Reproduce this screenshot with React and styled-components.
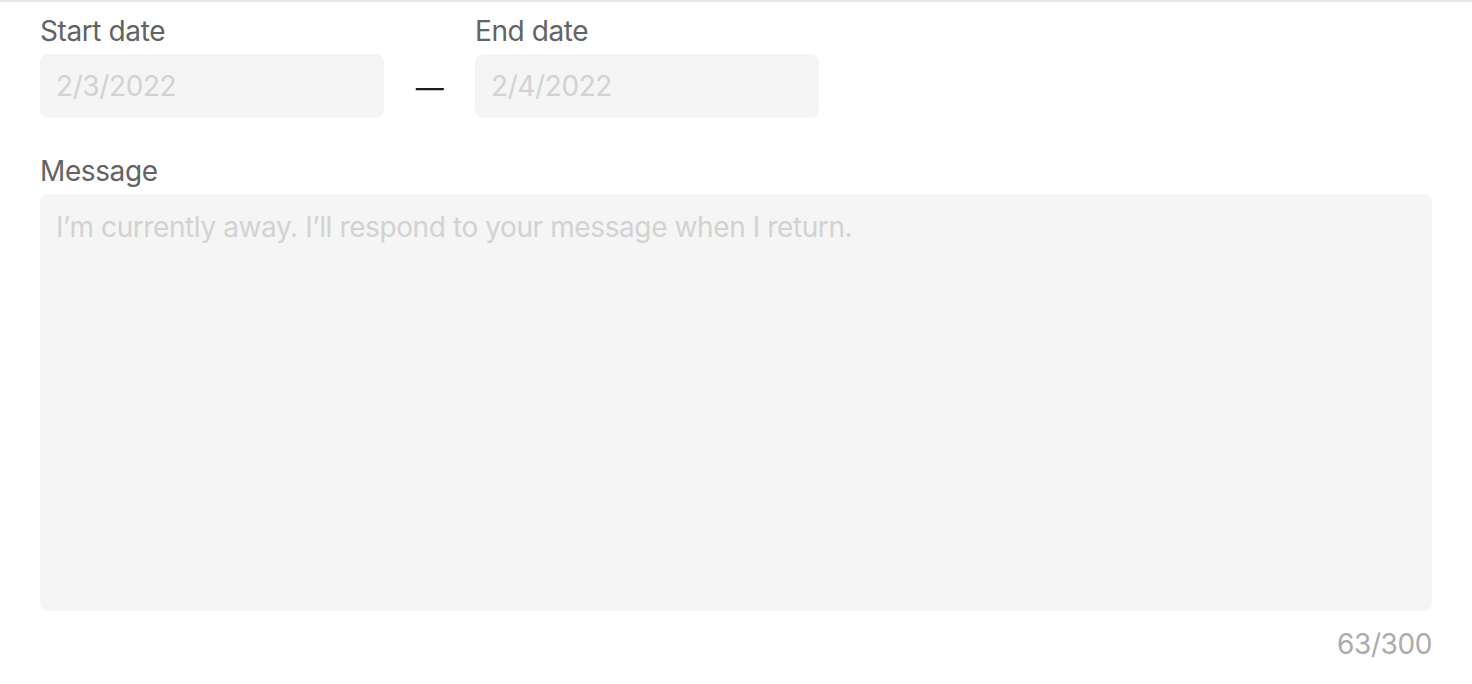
import React from 'react';
import styled, { createGlobalStyle } from 'styled-components';

const GlobalStyle = createGlobalStyle`
  html, body {
    margin: 0;
    padding: 0;
    background: #fff;
    font-family: Inter, "Liberation Sans", sans-serif;
  }
`;

const Panel = styled.div`
  width: 100%;
  box-sizing: border-box;
  border-top: 2px solid #e6e6e6;
  padding: 12px 40px 20px;
  letter-spacing: -0.4px;
`;

const DateRow = styled.div`
  display: flex;
  align-items: flex-end;
  margin-bottom: 36px;
`;

const Field = styled.div`
  display: flex;
  flex-direction: column;
  width: ${props => props.width || 'auto'};
`;

const Label = styled.label`
  font-size: 28px;
  line-height: 34px;
  color: #636363;
  margin-bottom: 6px;
`;

const DateInput = styled.input`
  height: 64px;
  box-sizing: border-box;
  border: none;
  border-radius: 8px;
  background: #f5f5f5;
  padding: 0 16px;
  font-family: inherit;
  font-size: 28px;
  letter-spacing: inherit;
  color: #333;
  outline: none;

  &::placeholder {
    color: #d2d2d2;
  }
`;

const Dash = styled.div`
  width: 91px;
  height: 64px;
  display: flex;
  align-items: center;
  justify-content: center;
  font-size: 28px;
  color: #1c1c1c;
  padding-top: 4px;
  box-sizing: border-box;
`;

const MessageArea = styled.textarea`
  display: block;
  width: 100%;
  height: 417px;
  box-sizing: border-box;
  border: none;
  border-radius: 8px;
  background: #f5f5f5;
  padding: 16px;
  font-family: inherit;
  font-size: 28px;
  line-height: 34px;
  letter-spacing: inherit;
  color: #333;
  resize: none;
  outline: none;

  &::placeholder {
    color: #d2d2d2;
  }
`;

const Counter = styled.div`
  margin-top: 16px;
  text-align: right;
  font-size: 28px;
  line-height: 34px;
  color: #ababab;
`;

const App = () => {
  const placeholder = 'I’m currently away. I’ll respond to your message when I return.';

  return (
    <>
      <GlobalStyle />
      <Panel>
        <DateRow>
          <Field width="344px">
            <Label>Start date</Label>
            <DateInput placeholder="2/3/2022" />
          </Field>
          <Dash>—</Dash>
          <Field width="344px">
            <Label>End date</Label>
            <DateInput placeholder="2/4/2022" />
          </Field>
        </DateRow>

        <Field>
          <Label>Message</Label>
          <MessageArea placeholder={placeholder} />
        </Field>
        <Counter>{placeholder.length}/300</Counter>
      </Panel>
    </>
  );
};

export default App;
